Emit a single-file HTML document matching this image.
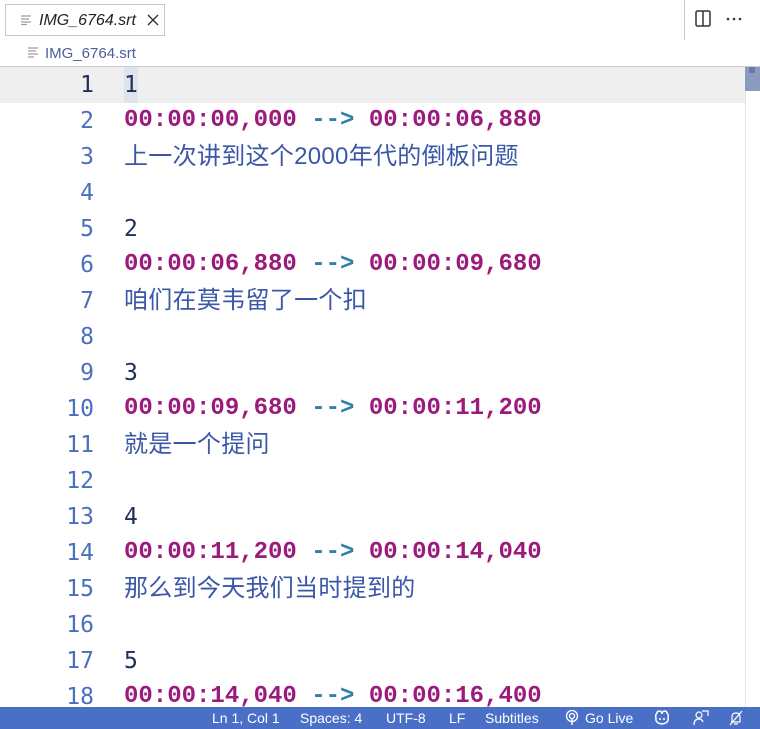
<!DOCTYPE html>
<html><head><meta charset="utf-8"><style>
*{margin:0;padding:0;box-sizing:border-box}
body{width:760px;height:729px;overflow:hidden;background:#fff;position:relative;font-family:"Liberation Sans","Noto Sans CJK SC",sans-serif}
.tabbar{position:absolute;left:0;top:0;width:760px;height:40px;background:#fff}
.tab{position:absolute;left:5px;top:4px;width:160px;height:32px;border:1px solid #c8c8c8;background:#fff}
.tab .ic{position:absolute;left:15px;top:10px}
.tab .nm{position:absolute;left:33px;top:7px;font-size:16px;font-style:italic;color:#222}
.vsep{position:absolute;left:684px;top:0;width:1px;height:40px;background:#ccc}
.bc{position:absolute;left:0;top:40px;height:26px;width:760px}
.bc .nm{position:absolute;left:45px;top:5px;font-size:15px;color:#4a5e9c}
.edtop{position:absolute;left:0;top:66px;width:760px;height:1px;background:#ccc}
.cur{position:absolute;left:0;top:67px;width:745px;height:36px;background:#eeefee}
.sel{position:absolute;left:124px;top:67px;width:14px;height:36px;background:#dde4ec}
.line{position:absolute;left:0;height:36px;line-height:36px;font-size:24px;white-space:pre}
.ln{position:absolute;left:0;width:94px;text-align:right;color:#4a6fbf;font-family:"DejaVu Sans Mono","Liberation Mono",monospace;font-size:23px}
.tx{position:absolute;left:124px;font-family:"Liberation Mono","Noto Sans CJK SC",monospace}
.ts{color:#9c1a7c;font-weight:bold}
.ar{color:#2f7fa8;font-weight:bold}
.zh{color:#3a57a8;font-family:"Liberation Sans","Noto Sans CJK SC",sans-serif;letter-spacing:0.3px}
.num{color:#232c5c;font-family:"DejaVu Sans Mono",monospace;font-size:23px}
.scroll{position:absolute;left:745px;top:67px;width:15px;height:640px;background:#fff;border-left:1px solid #e5e5e5}
.thumb{position:absolute;left:745px;top:67px;width:15px;height:24px;background:#8b9bbf}
.thumb i{position:absolute;left:4px;top:0;width:6px;height:6px;background:#6a7aa5}
.status{position:absolute;left:0;top:707px;width:760px;height:22px;background:#4a6fc6;color:#fff;font-size:14px;line-height:22px}
.status span{position:absolute;top:0}
.status svg{position:absolute;top:3px}
</style></head><body>
<div class="tabbar">
 <div class="tab">
  <svg class="ic" width="12" height="10" viewBox="0 0 12 10"><g stroke="#999" stroke-width="1.2"><line x1="0" y1="1" x2="10" y2="1"/><line x1="0" y1="4" x2="8" y2="4"/><line x1="0" y1="7" x2="10" y2="7"/><line x1="0" y1="9.5" x2="6" y2="9.5"/></g></svg>
  <span class="nm">IMG_6764.srt</span>
  <svg style="position:absolute;left:141px;top:9px" width="12" height="12" viewBox="0 0 12 12"><path d="M1 1L11 11M11 1L1 11" stroke="#333" stroke-width="1.4"/></svg>
 </div>
 <div class="vsep"></div>
 <svg style="position:absolute;left:695px;top:10px" width="16" height="17" viewBox="0 0 16 17"><rect x="1" y="1" width="14" height="15" rx="1.5" fill="none" stroke="#333" stroke-width="1.5"/><line x1="8" y1="1" x2="8" y2="16" stroke="#333" stroke-width="1.5"/></svg>
 <svg style="position:absolute;left:726px;top:17px" width="16" height="4" viewBox="0 0 16 4"><circle cx="2" cy="2" r="1.3" fill="#333"/><circle cx="8" cy="2" r="1.3" fill="#333"/><circle cx="14" cy="2" r="1.3" fill="#333"/></svg>
</div>
<div class="bc">
 <svg style="position:absolute;left:28px;top:7px" width="12" height="12" viewBox="0 0 12 12"><g stroke="#999" stroke-width="1.2"><line x1="0" y1="1" x2="10" y2="1"/><line x1="0" y1="4" x2="8" y2="4"/><line x1="0" y1="7" x2="10" y2="7"/><line x1="0" y1="10" x2="6" y2="10"/></g></svg>
 <span class="nm">IMG_6764.srt</span>
</div>
<div class="edtop"></div>
<div class="cur"></div><div class="sel"></div>

<div class="line" style="top:67px"><span class="ln" style="color:#232c5c">1</span><span class="tx num">1</span></div>
<div class="line" style="top:103px"><span class="ln">2</span><span class="tx"><span class="ts">00:00:00,000</span> <span class="ar">--&gt;</span> <span class="ts">00:00:06,880</span></span></div>
<div class="line" style="top:139px"><span class="ln">3</span><span class="tx zh">上一次讲到这个2000年代的倒板问题</span></div>
<div class="line" style="top:175px"><span class="ln">4</span></div>
<div class="line" style="top:211px"><span class="ln">5</span><span class="tx num">2</span></div>
<div class="line" style="top:247px"><span class="ln">6</span><span class="tx"><span class="ts">00:00:06,880</span> <span class="ar">--&gt;</span> <span class="ts">00:00:09,680</span></span></div>
<div class="line" style="top:283px"><span class="ln">7</span><span class="tx zh">咱们在莫韦留了一个扣</span></div>
<div class="line" style="top:319px"><span class="ln">8</span></div>
<div class="line" style="top:355px"><span class="ln">9</span><span class="tx num">3</span></div>
<div class="line" style="top:391px"><span class="ln">10</span><span class="tx"><span class="ts">00:00:09,680</span> <span class="ar">--&gt;</span> <span class="ts">00:00:11,200</span></span></div>
<div class="line" style="top:427px"><span class="ln">11</span><span class="tx zh">就是一个提问</span></div>
<div class="line" style="top:463px"><span class="ln">12</span></div>
<div class="line" style="top:499px"><span class="ln">13</span><span class="tx num">4</span></div>
<div class="line" style="top:535px"><span class="ln">14</span><span class="tx"><span class="ts">00:00:11,200</span> <span class="ar">--&gt;</span> <span class="ts">00:00:14,040</span></span></div>
<div class="line" style="top:571px"><span class="ln">15</span><span class="tx zh">那么到今天我们当时提到的</span></div>
<div class="line" style="top:607px"><span class="ln">16</span></div>
<div class="line" style="top:643px"><span class="ln">17</span><span class="tx num">5</span></div>
<div class="line" style="top:679px"><span class="ln">18</span><span class="tx"><span class="ts">00:00:14,040</span> <span class="ar">--&gt;</span> <span class="ts">00:00:16,400</span></span></div>

<div class="scroll"></div><div class="thumb"><i></i></div>
<div class="status">
 <span style="left:212px">Ln 1, Col 1</span>
 <span style="left:300px">Spaces: 4</span>
 <span style="left:386px">UTF-8</span>
 <span style="left:449px">LF</span>
 <span style="left:485px">Subtitles</span>
 <svg style="left:565px" width="14" height="16" viewBox="0 0 14 16"><circle cx="7" cy="6" r="5.5" fill="none" stroke="#fff" stroke-width="1.3"/><circle cx="7" cy="6" r="2.5" fill="none" stroke="#fff" stroke-width="1.3"/><line x1="7" y1="8" x2="7" y2="15" stroke="#fff" stroke-width="1.5"/></svg>
 <span style="left:585px">Go Live</span>
 <svg style="left:654px" width="16" height="15" viewBox="0 0 16 15"><path d="M3 3Q3 1 6 1Q8 2 8 4Q8 2 10 1Q13 1 13 3Q15 5 14 8Q15 13 8 14Q1 13 2 8Q1 5 3 3Z" fill="none" stroke="#fff" stroke-width="1.5"/><circle cx="6" cy="9" r="1" fill="#fff"/><circle cx="10" cy="9" r="1" fill="#fff"/></svg>
 <svg style="left:693px" width="16" height="16" viewBox="0 0 16 16"><circle cx="6" cy="5" r="3" fill="none" stroke="#fff" stroke-width="1.2"/><path d="M1 15Q1 9 6 9Q9 9 10 12" fill="none" stroke="#fff" stroke-width="1.2"/><path d="M9 1H15V6" fill="none" stroke="#fff" stroke-width="1.2"/></svg>
 <svg style="left:728px" width="16" height="16" viewBox="0 0 16 16"><path d="M4 12V7Q4 3 8 3Q12 3 12 7V12H3M6 14H10" fill="none" stroke="#fff" stroke-width="1.2"/><line x1="2" y1="15" x2="14" y2="1" stroke="#fff" stroke-width="1.2"/></svg>
</div>
</body></html>
